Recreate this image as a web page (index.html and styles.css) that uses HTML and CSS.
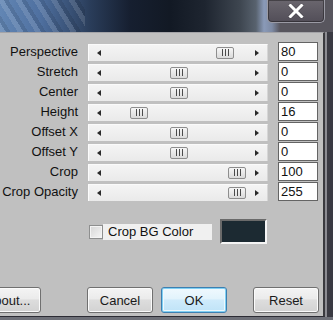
FILE: index.html
```html
<!DOCTYPE html>
<html lang="en">
    <head>
        <meta charset="UTF-8" />
        <meta name="viewport" content="width=device-width, initial-scale=1.0" />
        <title>Perspective Settings</title>
        <link rel="stylesheet" href="styles.css">
    </head>
    <body>
        <div class="window">
            <div class="titlebar">
                <button class="close-btn" aria-label="Close">
                    <svg width="16" height="14" viewBox="0 0 16 14">
                        <path d="M2.5 1.5 L13.5 12.5 M13.5 1.5 L2.5 12.5" stroke="#1c1c22" stroke-width="4" stroke-linecap="square" opacity="0.35"/>
                        <path d="M2.5 1.5 L13.5 12.5 M13.5 1.5 L2.5 12.5" stroke="#fff" stroke-width="3" stroke-linecap="square"/>
                    </svg>
                </button>
            </div>
            <div class="frame">
                <div class="client">
                    <div class="settings">
                        <div class="row">
                            <label class="label">Perspective</label>
                            <div class="track"><span class="arrow arrow-left"></span><span class="arrow arrow-right"></span><span class="thumb" style="left: 127px"><i class="grip"></i></span></div>
                            <div class="value">80</div>
                        </div>
                        <div class="row">
                            <label class="label">Stretch</label>
                            <div class="track"><span class="arrow arrow-left"></span><span class="arrow arrow-right"></span><span class="thumb" style="left: 81px"><i class="grip"></i></span></div>
                            <div class="value">0</div>
                        </div>
                        <div class="row">
                            <label class="label">Center</label>
                            <div class="track"><span class="arrow arrow-left"></span><span class="arrow arrow-right"></span><span class="thumb" style="left: 81px"><i class="grip"></i></span></div>
                            <div class="value">0</div>
                        </div>
                        <div class="row">
                            <label class="label">Height</label>
                            <div class="track"><span class="arrow arrow-left"></span><span class="arrow arrow-right"></span><span class="thumb" style="left: 41px"><i class="grip"></i></span></div>
                            <div class="value">16</div>
                        </div>
                        <div class="row">
                            <label class="label">Offset X</label>
                            <div class="track"><span class="arrow arrow-left"></span><span class="arrow arrow-right"></span><span class="thumb" style="left: 81px"><i class="grip"></i></span></div>
                            <div class="value">0</div>
                        </div>
                        <div class="row">
                            <label class="label">Offset Y</label>
                            <div class="track"><span class="arrow arrow-left"></span><span class="arrow arrow-right"></span><span class="thumb" style="left: 81px"><i class="grip"></i></span></div>
                            <div class="value">0</div>
                        </div>
                        <div class="row">
                            <label class="label">Crop</label>
                            <div class="track"><span class="arrow arrow-left"></span><span class="arrow arrow-right"></span><span class="thumb" style="left: 139px"><i class="grip"></i></span></div>
                            <div class="value">100</div>
                        </div>
                        <div class="row">
                            <label class="label">Crop Opacity</label>
                            <div class="track"><span class="arrow arrow-left"></span><span class="arrow arrow-right"></span><span class="thumb" style="left: 139px"><i class="grip"></i></span></div>
                            <div class="value">255</div>
                        </div>
                    </div>

                    <div class="color-row">
                        <span class="checkbox"></span>
                        <span class="check-label">Crop BG Color</span>
                        <span class="swatch"></span>
                    </div>

                    <div class="buttons">
                        <button class="btn btn-about">About...</button>
                        <button class="btn btn-cancel">Cancel</button>
                        <button class="btn btn-ok">OK</button>
                        <button class="btn btn-reset">Reset</button>
                    </div>
                </div>
                <div class="frame-right"></div>
            </div>
            <div class="frame-bottom"></div>
        </div>
    </body>
</html>
```

FILE: styles.css
```css
* {
    box-sizing: border-box;
}

body {
    margin: 0;
    width: 333px;
    height: 320px;
    overflow: hidden;
    font-family: "Liberation Sans", Arial, sans-serif;
    font-size: 13px;
    color: #111;
}

.window {
    width: 333px;
    height: 320px;
    display: flex;
    flex-direction: column;
    background: #3c3c44;
}

/* glass title bar */
.titlebar {
    height: 32px;
    flex: none;
    display: flex;
    justify-content: flex-end;
    align-items: flex-start;
    padding-right: 8px;
    background:
        repeating-linear-gradient(58deg, rgba(255, 255, 255, 0.12) 0 5px, rgba(0, 0, 0, 0.10) 5px 9px, transparent 9px 15px) 0 0 / 85px 32px no-repeat,
        linear-gradient(90deg, #6286b4 0, #4f70a0 40px, #2a3d5a 90px, #161f30 130px, #121924 170px, #1e2530 205px, #3e4650 240px, #58626e 256px, #8a9ab8 264px, #7d8aa4 272px, #58565e 280px, #58565e 333px);
}

.close-btn {
    width: 58px;
    height: 23px;
    padding: 0;
    display: flex;
    justify-content: center;
    align-items: center;
    background: linear-gradient(#6a666e, #524e58);
    border: 1px solid #9a9aa4;
    border-top: none;
    border-radius: 0 0 5px 5px;
    box-shadow: inset 0 0 0 1px rgba(0, 0, 0, 0.35);
}

.frame {
    flex: 1;
    display: flex;
}

.client {
    width: 325px;
    background: #c0c0c0;
    border-top: 1px solid #a4a4a8;
    border-right: 2px solid #3a3a3e;
    border-bottom: 1px solid #2c2c34;
    padding-top: 9px;
}

.frame-right {
    flex: 1;
    border-left: 2px solid #8c8c92;
    background: #3a3a42;
}

.frame-bottom {
    height: 3px;
    flex: none;
    background: #6e7078;
}

/* slider rows */
.settings {
    display: flex;
    flex-direction: column;
}

.row {
    display: grid;
    grid-template-columns: 78px 180px 40px;
    column-gap: 10px;
    height: 20px;
    align-items: center;
}

.label {
    text-align: right;
    white-space: nowrap;
    line-height: 16px;
}

.track {
    position: relative;
    height: 17px;
    display: flex;
    justify-content: space-between;
    align-items: center;
    padding: 0 8px;
    background: linear-gradient(#f4f4f4, #eaeaea);
    border-top: 1px solid #fafafa;
    border-left: 1px solid #fcfcfc;
    border-right: 1px solid #d6d6d6;
}

.arrow {
    width: 0;
    height: 0;
    border-top: 3.5px solid transparent;
    border-bottom: 3.5px solid transparent;
}

.arrow-left {
    border-right: 4px solid #2a2a2a;
}

.arrow-right {
    border-left: 4px solid #2a2a2a;
}

.thumb {
    position: absolute;
    top: 2px;
    width: 18px;
    height: 12px;
    display: flex;
    justify-content: center;
    align-items: center;
    border: 1px solid #8e8e8e;
    border-radius: 2px;
    background: linear-gradient(#f6f6f6, #dadada);
}

.grip {
    width: 7px;
    height: 7px;
    background: repeating-linear-gradient(90deg, #4a4a4a 0 1px, transparent 1px 3px);
}

.value {
    align-self: start;
    height: 19px;
    padding: 1px 0 0 2px;
    line-height: 16px;
    background: #fff;
    border: 1px solid #646464;
}

/* colour option */
.color-row {
    display: flex;
    align-items: center;
    height: 25px;
    margin-top: 17px;
    padding-left: 89px;
}

.checkbox {
    width: 14px;
    height: 14px;
    border: 1px solid #8e8f8f;
    background: linear-gradient(135deg, #d6d6d6, #f6f6f6);
    box-shadow: inset 0 0 0 1px #f4f4f4;
}

.check-label {
    width: 109px;
    height: 16px;
    line-height: 16px;
    padding-left: 5px;
    background: #f0f0f0;
}

.swatch {
    width: 47px;
    height: 25px;
    margin-left: 8px;
    background: #1c2a32;
    border: 2px solid;
    border-color: #6a6a6a #f4f4f4 #f4f4f4 #6a6a6a;
}

/* dialog buttons */
.buttons {
    display: flex;
    margin-top: 43px;
    margin-left: -25px;
}

.btn {
    width: 66px;
    height: 26px;
    padding: 0;
    font-family: inherit;
    font-size: 13px;
    color: #1a1a1a;
    background: linear-gradient(#f4f4f4 0, #ebebeb 45%, #dddddd 50%, #d2d2d2 100%);
    border: 1px solid #707070;
    border-radius: 3px;
    box-shadow: inset 0 0 0 1px #fbfbfb;
}

.btn-cancel {
    margin-left: 46px;
}

.btn-ok {
    margin-left: 8px;
    border-color: #3c7fb1;
    background: linear-gradient(#f0f9fe 0, #e2f3fc 45%, #cfebfb 50%, #bfe3f7 100%);
    box-shadow: inset 0 0 0 1px #7fd0f4, inset 0 0 0 2px #eef8fd;
}

.btn-reset {
    margin-left: 26px;
}
```
